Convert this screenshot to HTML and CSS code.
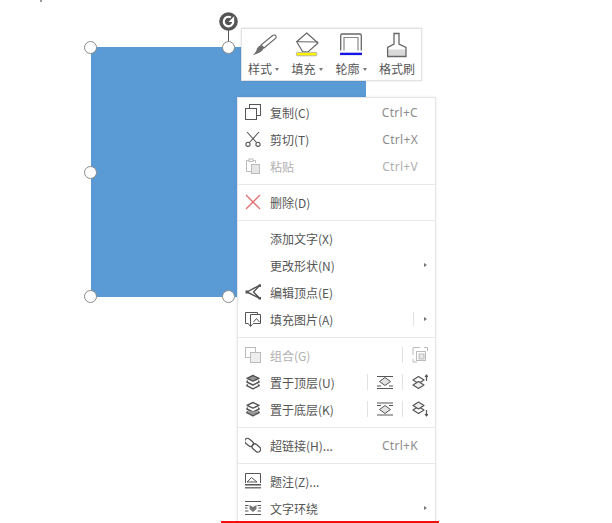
FILE: index.html
```html
<!DOCTYPE html>
<html lang="zh">
<head>
<meta charset="utf-8">
<title>形状右键菜单</title>
<link rel="stylesheet" href="styles.css">
</head>
<body>
<main class="canvas">
  <span class="speck"></span>
  <div class="shape"></div>
  <span class="stem"></span>
  <span class="handle h-tl"></span>
  <span class="handle h-tc"></span>
  <span class="handle h-ml"></span>
  <span class="handle h-bl"></span>
  <span class="handle h-bc"></span>
  <svg class="rotate" viewBox="0 0 20 20"><circle cx="10" cy="10" r="9.800" fill="#555"/><path d="M15 10.500A5 5 0 1 1 12.500 5.700" fill="none" stroke="#fff" stroke-width="2.300"/><path d="M16 4.500v6h-6z" fill="#fff"/></svg>

  <div class="toolbar">
    <div class="tool t1">
      <svg class="tool-icon" viewBox="0 0 26 26"><path d="M21 4L10 13l3 3L25 6q.5-3-1.500-3-1.500 0-2.500 1z" fill="#fff" stroke="#666" stroke-width="1.100"/><path d="M10 13l3 3q-2 5-11 7 4-4 4-6.500 1-2.500 4-3.500z" fill="#6e6e6e"/></svg>
      <span class="tool-label">样式<i class="caret"></i></span>
    </div>
    <div class="tool t2">
      <svg class="tool-icon" viewBox="0 0 26 26"><path d="M12.700 1L24 11l-10 9-5.500-.5-5.800-9.800z" fill="#fff" stroke="#666" stroke-width="1.200"/><path d="M2.700 9.700L24 10" stroke="#666" stroke-width="1"/><rect x="2.400" y="20.400" width="20.400" height="3.400" rx=".8" fill="#fff200" stroke="#aaa" stroke-width=".8"/></svg>
      <span class="tool-label">填充<i class="caret"></i></span>
    </div>
    <div class="tool t3">
      <svg class="tool-icon" viewBox="0 0 26 26"><path d="M2.700 18.500V3.500Q2.700 2 4.200 2h17.600q1.500 0 1.500 1.500v15" fill="none" stroke="#666" stroke-width="1.300"/><path d="M6 18.500V5.500h14v13" fill="none" stroke="#888" stroke-width="1.200"/><rect x="2" y="20.700" width="22" height="2.400" fill="#1515e0"/></svg>
      <span class="tool-label">轮廓<i class="caret"></i></span>
    </div>
    <div class="tool t4">
      <svg class="tool-icon" viewBox="0 0 26 26"><rect x="3.600" y="17.500" width="18" height="7" fill="#d9d9d9"/><path d="M10 1.500h5V12l7 3.500V24.500H3.600V15.500L10 12z" fill="none" stroke="#666" stroke-width="1.300"/></svg>
      <span class="tool-label">格式刷</span>
    </div>
  </div>

  <nav class="menu">
    <div class="row">
      <svg class="icon" viewBox="0 0 16 16"><rect x="4.500" y=".5" width="11" height="11" fill="#fff" stroke="#555"/><rect x=".5" y="4.500" width="11" height="11" fill="#fff" stroke="#555"/></svg>
      <span class="label">复制(C)</span><span class="key">Ctrl+C</span>
    </div>
    <div class="row">
      <svg class="icon" viewBox="0 0 16 16"><path d="M2 1l9.500 10.500M14 1L4.500 11.500" fill="none" stroke="#555" stroke-width="1.100"/><circle cx="3" cy="13.300" r="2.100" fill="none" stroke="#555" stroke-width="1.100"/><circle cx="13" cy="13.300" r="2.100" fill="none" stroke="#555" stroke-width="1.100"/></svg>
      <span class="label">剪切(T)</span><span class="key">Ctrl+X</span>
    </div>
    <div class="row off">
      <svg class="icon" viewBox="0 0 16 16"><path d="M10.500 5V2.500h-9v11h5" fill="none" stroke="#bbb"/><rect x="4" y="1" width="4" height="2.500" fill="#fff" stroke="#bbb"/><rect x="6.500" y="6.500" width="8" height="9" fill="#e6e6e6" stroke="#bbb"/></svg>
      <span class="label">粘贴</span><span class="key">Ctrl+V</span>
    </div>
    <hr class="sep">
    <div class="row">
      <svg class="icon" viewBox="0 0 16 16"><path d="M1 1l14 14M15 1L1 15" fill="none" stroke="#e0706f" stroke-width="1.300"/></svg>
      <span class="label">删除(D)</span>
    </div>
    <hr class="sep">
    <div class="row"><span class="icon"></span><span class="label">添加文字(X)</span></div>
    <div class="row"><span class="icon"></span><span class="label">更改形状(N)</span><i class="arrow"></i></div>
    <div class="row">
      <svg class="icon" viewBox="0 0 16 16"><path d="M15 1L2 8l13 6.500L8.500 8z" fill="none" stroke="#555" stroke-width="1.400" stroke-linejoin="round"/><rect x=".5" y="6.500" width="3" height="3" fill="#555"/><rect x="13.500" y=".5" width="2.500" height="2.500" fill="#555"/><rect x="13.500" y="13" width="2.500" height="2.500" fill="#555"/></svg>
      <span class="label">编辑顶点(E)</span>
    </div>
    <div class="row">
      <svg class="icon" viewBox="0 0 16 16"><path d="M3.500 12.500H.5V1.500h12v2" fill="none" stroke="#555"/><path d="M5.500 10V3.500h10v9H8" fill="none" stroke="#555"/><path d="M8.500 11l3-3.500 3 3.500" fill="none" stroke="#555"/><path d="M5.500 9v6M3.500 13l2 2.500 2-2.500" fill="none" stroke="#555"/></svg>
      <span class="label">填充图片(A)</span><i class="bar"></i><i class="arrow"></i>
    </div>
    <hr class="sep">
    <div class="row off">
      <svg class="icon" viewBox="0 0 16 16"><rect x=".5" y=".5" width="10" height="10" fill="none" stroke="#bbb"/><rect x="5.500" y="5.500" width="10" height="10" fill="#eee" stroke="#bbb"/></svg>
      <span class="label">组合(G)</span>
      <span class="tail"><i class="bar tall"></i>
        <svg class="icon" viewBox="0 0 16 16"><path d="M8 .5H1V8M1 12v3h4M12 .5h3.500V4" fill="none" stroke="#bbb"/><rect x="4.500" y="4.500" width="9" height="9" fill="none" stroke="#bbb"/><rect x="7" y="7" width="5" height="5" fill="#e6e6e6" stroke="#bbb"/></svg>
      </span>
    </div>
    <div class="row">
      <svg class="icon" viewBox="0 0 16 16"><g fill="none" stroke="#555" stroke-width="1.400" stroke-linejoin="round"><path d="M8 1.500l6 2.800-6 2.800-6-2.800z" fill="#999"/><path d="M2.700 6.500L1.800 8 8 11l6.200-3-.9-1.500"/><path d="M2.700 10.300L1.800 11.700 8 14.800l6.200-3.100-.9-1.400"/></g></svg>
      <span class="label">置于顶层(U)</span>
      <span class="tail"><i class="bar tall"></i>
        <svg class="icon" viewBox="0 0 16 16"><path d="M0 2.500h16M0 14.500h16M0 12h4M12 12h4" stroke="#555" fill="none"/><path d="M8 3.500l5.500 4L8 11.500 2.500 7.500z" fill="#e3e3e3" stroke="#555"/></svg>
        <i class="bar tall"></i>
        <svg class="icon" viewBox="0 0 16 16"><g fill="none" stroke="#555" stroke-width="1.200" stroke-linejoin="round"><path d="M6.500 2.500l5.500 3.500-5.500 3.500L1 6z"/><path d="M6.500 7.500l5.500 3.500-5.500 3.500L1 11z" fill="#eee"/><path d="M14.500 7V1M13 3l1.500-2L16 3"/></g></svg>
      </span>
    </div>
    <div class="row">
      <svg class="icon" viewBox="0 0 16 16"><g fill="none" stroke="#555" stroke-width="1.400" stroke-linejoin="round"><path d="M8 1.500l6 2.800-6 2.800-6-2.800z"/><path d="M2.700 6.500L1.800 8 8 11l6.200-3-.9-1.500"/><path d="M2.700 10.300L1.800 11.700 8 14.800l6.200-3.100-.9-1.400" fill="#999"/></g></svg>
      <span class="label">置于底层(K)</span>
      <span class="tail"><i class="bar tall"></i>
        <svg class="icon" viewBox="0 0 16 16"><path d="M0 2h16M0 14h16M0 4.500h4M12 4.500h4" stroke="#555" fill="none"/><path d="M8 4.500l5.500 4-5.500 4-5.500-4z" fill="#e3e3e3" stroke="#555"/></svg>
        <i class="bar tall"></i>
        <svg class="icon" viewBox="0 0 16 16"><g fill="none" stroke="#555" stroke-width="1.200" stroke-linejoin="round"><path d="M6.500 5.500l5.500 3.500-5.500 3.500L1 9z"/><path d="M6.500 1l5.500 3.500L6.500 8 1 4.500z" fill="#eee"/><path d="M14.500 9v6M13 13l1.500 2 1.500-2"/></g></svg>
      </span>
    </div>
    <hr class="sep">
    <div class="row">
      <svg class="icon" viewBox="0 0 16 16"><g fill="none" stroke="#555" stroke-width="1.300"><rect x="-.5" y="2.500" width="9.500" height="5.500" rx="2.700" transform="rotate(40 4 5)"/><rect x="6.500" y="8" width="9.500" height="5.500" rx="2.700" transform="rotate(40 11 11)"/></g></svg>
      <span class="label">超链接(H)...</span><span class="key">Ctrl+K</span>
    </div>
    <hr class="sep">
    <div class="row">
      <svg class="icon" viewBox="0 0 16 16"><path d="M.5 10V.5h15V10" fill="none" stroke="#555"/><path d="M2 9l4.500-4.500L12 9z" fill="none" stroke="#555"/><rect x="0" y="11" width="16" height="1.500" fill="#555"/><rect x="0" y="14" width="16" height="1.500" fill="#777"/></svg>
      <span class="label">题注(Z)...</span>
    </div>
    <div class="row">
      <svg class="icon" viewBox="0 0 16 16"><path d="M0 1.500h16M0 14.500h16M0 5.500h3.500M12.500 5.500H16M0 8h2.500M13.500 8H16M0 11h3.500M12.500 11H16" stroke="#555" fill="none"/><path d="M4.500 5l3.500 2 3.500-2v4L8 12 4.500 9z" fill="#777"/></svg>
      <span class="label">文字环绕</span><i class="arrow"></i>
    </div>
  </nav>
  <div class="underline"></div>
</main>
</body>
</html>
```

FILE: styles.css
```css
* { box-sizing: border-box; }
html, body {
  margin: 0;
  background: #fff;
}
.canvas {
  position: relative;
  width: 612px;
  height: 523px;
  overflow: hidden;
  font-family: "Noto Sans CJK SC", "Noto Sans", sans-serif;
  color: #555;
}
.speck {
  position: absolute;
  left: 40px;
  top: 0;
  width: 2px;
  height: 2px;
  background: #999;
}
.shape {
  position: absolute;
  left: 91px;
  top: 47px;
  width: 275px;
  height: 250px;
  background: #5b9bd5;
}
.stem {
  position: absolute;
  left: 228px;
  top: 28px;
  width: 1px;
  height: 15px;
  background: #555;
}
.handle {
  position: absolute;
  width: 13px;
  height: 13px;
  border: 1.5px solid #8a8a8a;
  border-radius: 50%;
  background: #fff;
}
.h-tl { left: 84px; top: 41px; }
.h-tc { left: 222px; top: 41px; }
.h-ml { left: 84px; top: 166px; }
.h-bl { left: 84px; top: 290px; }
.h-bc { left: 222px; top: 290px; }
.rotate {
  position: absolute;
  left: 219px;
  top: 12px;
  width: 19px;
  height: 19px;
}
.toolbar {
  position: absolute;
  left: 241px;
  top: 28px;
  width: 181px;
  height: 53px;
  display: flex;
  padding: 3px 0 0;
  background: #fff;
  border: 1px solid #e2e2e2;
  box-shadow: 0 0 2px rgba(0, 0, 0, .12);
}
.tool {
  display: flex;
  flex-direction: column;
  align-items: center;
}
.t1 { width: 43px; }
.t2 { width: 44px; }
.t3 { width: 44px; }
.t4 { width: 48px; }
.tool-icon {
  flex: none;
  width: 26px;
  height: 26px;
}
.tool-label {
  display: flex;
  align-items: center;
  height: 20px;
  margin-top: 1px;
  font-size: 12px;
  line-height: 20px;
  color: #555;
}
.caret {
  width: 0;
  height: 0;
  margin-left: 3px;
  border-left: 2.500px solid transparent;
  border-right: 2.500px solid transparent;
  border-top: 3px solid #777;
}
.menu {
  position: absolute;
  left: 237px;
  top: 97px;
  width: 199px;
  height: 440px;
  padding-top: 1.500px;
  background: #fff;
  border: 1px solid #e4e6ea;
  box-shadow: 0 0 3px rgba(0, 0, 0, .08);
}
.row {
  display: flex;
  align-items: center;
  height: 27px;
  padding: 0 8px 2px 7px;
  font-size: 12px;
  color: #555;
}
.row.off,
.row.off .key {
  color: #b0b0b0;
}
.icon {
  flex: none;
  display: block;
  width: 16px;
  height: 16px;
}
.label {
  margin-left: 9px;
  flex: 1;
  white-space: nowrap;
}
.key {
  margin-right: 9px;
  color: #8c8c8c;
  font-family: "Noto Sans", sans-serif;
  font-size: 12px;
  letter-spacing: .3px;
}
.sep {
  height: 1px;
  margin: 3px 0 5px;
  border: 0;
  background: #e6e8ec;
}
.arrow {
  width: 0;
  height: 0;
  border-top: 2.500px solid transparent;
  border-bottom: 2.500px solid transparent;
  border-left: 3px solid #777;
}
.bar {
  width: 1px;
  height: 14px;
  margin-right: 10px;
  background: #e2e2e2;
}
.tail {
  display: flex;
  align-items: center;
  gap: 0;
  margin-right: -1px;
}
.tail .icon {
  margin-right: 9px;
}
.tail .icon:last-child {
  margin-right: 0;
}
.tail .bar {
  margin-right: 9px;
}
.tall {
  height: 16px;
}
.underline {
  position: absolute;
  left: 221px;
  top: 521px;
  width: 218px;
  height: 1.500px;
  background: #f01010;
}
```
